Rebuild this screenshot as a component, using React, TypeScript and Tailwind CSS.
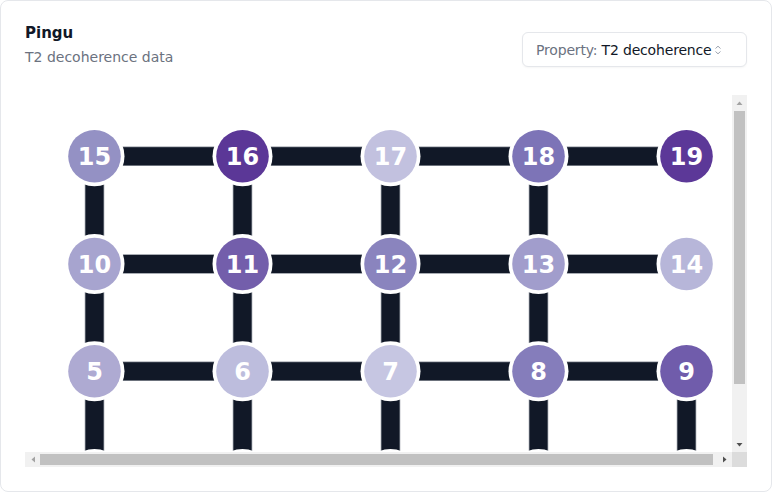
import React from "react";

const COLS = [69.5, 217.5, 365.5, 513.5, 661.5];
const ROWS = [383.9, 276.3, 169, 61.2]; // row 0 (ids 0-4) at bottom

const COLORS: Record<number, string> = {
  0: "#9d99c9",
  1: "#b3b1d6",
  2: "#8a83bf",
  3: "#a9a6d0",
  4: "#7a6fb4",
  5: "#aeaad2",
  6: "#bdbddd",
  7: "#c6c6e2",
  8: "#857dbb",
  9: "#705cab",
  10: "#a7a4cf",
  11: "#735eab",
  12: "#8a84be",
  13: "#a19dcc",
  14: "#b7b6d9",
  15: "#9491c4",
  16: "#5b3797",
  17: "#c2c1df",
  18: "#7d74b7",
  19: "#5c3898",
};

type Node = { id: number; x: number; y: number };

const nodes: Node[] = [];
for (let r = 0; r < 4; r++) {
  for (let c = 0; c < 5; c++) {
    nodes.push({ id: r * 5 + c, x: COLS[c], y: ROWS[r] });
  }
}

const edges: [number, number][] = [];
for (let r = 0; r < 4; r++) {
  for (let c = 0; c < 4; c++) edges.push([r * 5 + c, r * 5 + c + 1]);
}
for (let r = 0; r < 3; r++) {
  for (let c = 0; c < 5; c++) {
    if (c === 4 && r >= 1) continue;
    edges.push([r * 5 + c, (r + 1) * 5 + c]);
  }
}

function Graph() {
  const byId = (i: number) => nodes[i];
  return (
    <svg width={712} height={427} className="block">
      {edges.map(([a, b], i) => {
        const A = byId(a);
        const B = byId(b);
        return (
          <line key={"o" + i} x1={A.x} y1={A.y} x2={B.x} y2={B.y} stroke="#8b909a" strokeWidth={19.5} />
        );
      })}
      {edges.map(([a, b], i) => {
        const A = byId(a);
        const B = byId(b);
        return (
          <line key={"i" + i} x1={A.x} y1={A.y} x2={B.x} y2={B.y} stroke="#111827" strokeWidth={18} />
        );
      })}
      {nodes.map((n) => (
        <circle key={"w" + n.id} cx={n.x} cy={n.y} r={30} fill="#ffffff" />
      ))}
      {nodes.map((n) => (
        <g key={"n" + n.id}>
          <circle cx={n.x} cy={n.y} r={26.3} fill={COLORS[n.id]} />
          {n.id >= 5 && (
            <text
              x={n.x}
              y={n.y + 8.5}
              textAnchor="middle"
              fill="#ffffff"
              fontSize={24}
              fontWeight={700}
              fontFamily="'DejaVu Sans', sans-serif"
            >
              {n.id}
            </text>
          )}
        </g>
      ))}
    </svg>
  );
}

function Tri({ dir, color }: { dir: "up" | "down" | "left" | "right"; color: string }) {
  const d =
    dir === "up"
      ? "M0.5 4 L3.5 0.5 L6.5 4 Z"
      : dir === "down"
      ? "M0.5 0 L3.5 3.5 L6.5 0 Z"
      : dir === "left"
      ? "M4 0.5 L0.5 3.5 L4 6.5 Z"
      : "M0 0.5 L3.5 3.5 L0 6.5 Z";
  const vert = dir === "up" || dir === "down";
  return (
    <svg width={vert ? 7 : 4} height={vert ? 4 : 7} viewBox={vert ? "0 0 7 4" : "0 0 4 7"}>
      <path d={d} fill={color} />
    </svg>
  );
}

export default function App() {
  return (
    <div className="w-[772px] h-[492px] bg-white font-['DejaVu_Sans',sans-serif]">
      <div className="h-full border border-[#e5e7eb] rounded-lg px-6 pt-[23px] pb-6 flex flex-col">
        <div className="flex justify-between items-end">
          <div>
            <div className="text-[15px] leading-[18px] font-bold text-[#111827]">Pingu</div>
            <div className="mt-[5px] text-sm leading-5 text-[#6b7280]">T2 decoherence data</div>
          </div>
          <button className="w-[225px] h-[35px] border border-[#e5e7eb] rounded-md bg-white flex items-center pl-[13px] text-sm tracking-[-0.18px] whitespace-pre shadow-[0_1px_2px_rgba(0,0,0,0.04)]">
            <span className="text-[#6b7280]">Property: </span>
            <span className="text-[#111827]">T2 decoherence</span>
            <svg width="8" height="10" viewBox="0 0 8 10" className="ml-[3px]">
              <path d="M1.5 3.5 L4 1.2 L6.5 3.5" fill="none" stroke="#9ca3af" strokeWidth="1" />
              <path d="M1.5 6.5 L4 8.8 L6.5 6.5" fill="none" stroke="#9ca3af" strokeWidth="1" />
            </svg>
          </button>
        </div>
        <div className="mt-[28px] w-[722px] h-[372px] grid grid-cols-[707px_15px] grid-rows-[357px_15px]">
          <div className="overflow-hidden">
            <Graph />
          </div>
          <div className="bg-[#f1f1f1] flex flex-col">
            <div className="h-[15px] flex items-center justify-center">
              <Tri dir="up" color="#a3a3a3" />
            </div>
            <div className="flex-1 px-[2px] pt-px">
              <div className="h-[273px] bg-[#c1c1c1]" />
            </div>
            <div className="h-[15px] flex items-center justify-center">
              <Tri dir="down" color="#505050" />
            </div>
          </div>
          <div className="bg-[#f1f1f1] flex">
            <div className="w-[15px] flex items-center justify-center">
              <Tri dir="left" color="#a3a3a3" />
            </div>
            <div className="flex-1 py-[2px]">
              <div className="w-[673px] h-full bg-[#c1c1c1]" />
            </div>
            <div className="w-[15px] flex items-center justify-center">
              <Tri dir="right" color="#505050" />
            </div>
          </div>
          <div className="bg-[#dcdcdc]" />
        </div>
      </div>
    </div>
  );
}
